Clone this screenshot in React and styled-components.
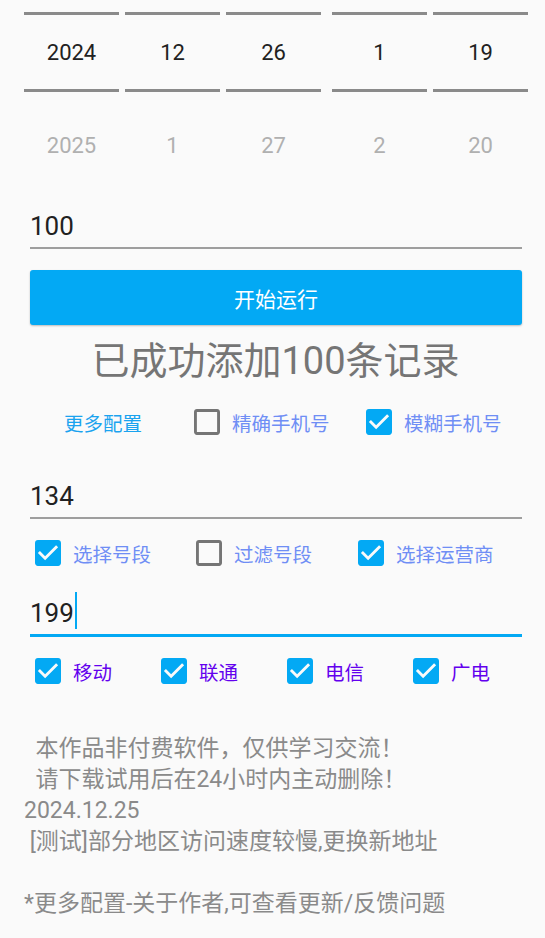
import React from 'react'
import styled, { createGlobalStyle } from 'styled-components'

const GlobalStyle = createGlobalStyle`
  body {
    margin: 0;
    background: #fafafa;
    font-family: Roboto, 'Noto Sans CJK SC', sans-serif;
  }
`

const datePicker = [
    { current: '2024', next: '2025' },
    { current: '12', next: '1' },
    { current: '26', next: '27' },
]

const timePicker = [
    { current: '1', next: '2' },
    { current: '19', next: '20' },
]

const BoxIcon = ({ checked }) => (
    <Box viewBox="3 3 18 18" $checked={checked}>
        {checked ? (
            <path d="M19 3H5c-1.11 0-2 .9-2 2v14c0 1.1.89 2 2 2h14c1.11 0 2-.9 2-2V5c0-1.1-.89-2-2-2zm-9 14l-5-5 1.41-1.41L10 14.17l7.59-7.59L19 8l-9 9z" />
        ) : (
            <path d="M19 5v14H5V5h14m0-2H5c-1.1 0-2 .9-2 2v14c0 1.1.9 2 2 2h14c1.1 0 2-.9 2-2V5c0-1.1-.9-2-2-2z" />
        )}
    </Box>
)

const Check = ({ checked, label, tone }) => (
    <CheckItem>
        <BoxIcon checked={checked} />
        <Label $tone={tone}>{label}</Label>
    </CheckItem>
)

const PickerColumns = ({ cols }) => (
    <PickerGroup>
        {cols.map((col, i) => (
            <Column key={i}>
                <Divider />
                <Selected>{col.current}</Selected>
                <Divider />
                <NextValue>{col.next}</NextValue>
            </Column>
        ))}
    </PickerGroup>
)

const App = () => {
    return (
        <Page>
            <GlobalStyle />

            <Pickers>
                <PickerColumns cols={datePicker} />
                <PickerColumns cols={timePicker} />
            </Pickers>

            <Field $top={13}>100</Field>

            <RunButton>开始运行</RunButton>

            <Status>已成功添加100条记录</Status>

            <OptionRow>
                <MoreLink>更多配置</MoreLink>
                <Check label="精确手机号" />
                <Check checked label="模糊手机号" />
            </OptionRow>

            <Field $top={39}>134</Field>

            <CheckRow $cols="161px 162px auto">
                <Check checked label="选择号段" />
                <Check label="过滤号段" />
                <Check checked label="选择运营商" />
            </CheckRow>

            <Field $top={25} $focused>
                199<Caret />
            </Field>

            <CheckRow $cols="repeat(4, 126px)">
                <Check checked tone="purple" label="移动" />
                <Check checked tone="purple" label="联通" />
                <Check checked tone="purple" label="电信" />
                <Check checked tone="purple" label="广电" />
            </CheckRow>

            <Notice>
                {'  本作品非付费软件，仅供学习交流！\n  请下载试用后在24小时内主动删除！\n2024.12.25\n [测试]部分地区访问速度较慢,更换新地址\n\n*更多配置-关于作者,可查看更新/反馈问题'}
            </Notice>
        </Page>
    )
}


const Page = styled.div`
  width: 545px;
  height: 938px;
  overflow: hidden;
  background: #fafafa;
`

const Pickers = styled.div`
  display: flex;
  gap: 11px;
  padding-left: 24px;
`

const PickerGroup = styled.div`
  display: flex;
  gap: 6px;
`

const Column = styled.div`
  width: 95px;
  padding-top: 12px;
  display: flex;
  flex-direction: column;
`

const Divider = styled.div`
  height: 3px;
  background: #8a8a8a;
`

const Selected = styled.div`
  height: 74px;
  display: flex;
  align-items: center;
  justify-content: center;
  font-size: 22px;
  color: #212121;
`

const NextValue = styled(Selected)`
  height: 106px;
  color: #b0b0b0;
`

const Field = styled.div`
  margin: ${p => p.$top}px 23px 0 30px;
  height: 30px;
  font-size: 26px;
  line-height: 30px;
  color: #212121;
  padding-bottom: 6px;
  border-bottom: ${p => (p.$focused ? '3px solid #03a9f4' : '2px solid #9e9e9e')};
  display: flex;
  align-items: flex-start;
`

const Caret = styled.span`
  width: 2px;
  height: 37px;
  margin: -6px 0 0 1px;
  background: #03a9f4;
`

const RunButton = styled.button`
  display: block;
  width: 492px;
  height: 55px;
  margin: 21px 0 0 30px;
  border: none;
  border-radius: 3px;
  background: #03a9f4;
  color: white;
  font-family: Roboto, 'Noto Sans CJK SC', sans-serif;
  font-size: 21px;
  box-shadow: 0 1px 2px rgba(0, 0, 0, 0.25);
  cursor: pointer;
`

const Status = styled.div`
  margin-top: 14px;
  height: 44px;
  line-height: 44px;
  text-align: center;
  font-size: 38px;
  color: #757575;
  padding-left: 6px;
`

const OptionRow = styled.div`
  margin-top: 19px;
  height: 40px;
  display: grid;
  grid-template-columns: 130px 172px auto;
  align-items: center;
  padding-left: 64px;
`

const MoreLink = styled.span`
  font-size: 19.5px;
  color: #1aa3ef;
`

const CheckRow = styled.div`
  margin-top: 14px;
  height: 40px;
  display: grid;
  grid-template-columns: ${p => p.$cols};
  align-items: center;
  padding-left: 35px;
`

const CheckItem = styled.div`
  display: flex;
  align-items: center;
  gap: 12px;
`

const Box = styled.svg`
  width: 26px;
  height: 26px;
  flex-shrink: 0;
  fill: ${p => (p.$checked ? '#03a9f4' : '#757575')};
`

const Label = styled.span`
  font-size: 19.5px;
  white-space: nowrap;
  color: ${p => (p.$tone === 'purple' ? '#6300ee' : '#6f8ef5')};
`

const Notice = styled.div`
  margin-top: 42px;
  padding-left: 24px;
  white-space: pre-wrap;
  font-size: 23px;
  line-height: 31px;
  color: #8a8a8a;
`

export default App
